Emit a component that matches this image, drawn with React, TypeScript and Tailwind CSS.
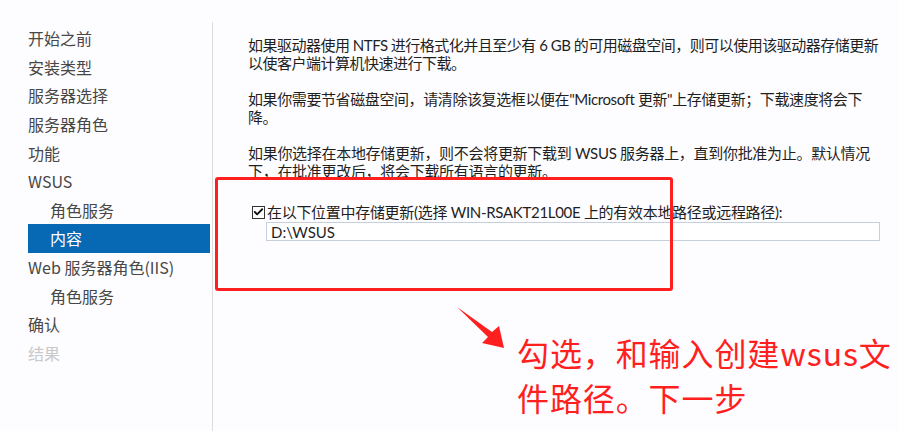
import { Check } from "lucide-react";

const navItems: { label: string; indent?: boolean; active?: boolean; disabled?: boolean }[] = [
  { label: "开始之前" },
  { label: "安装类型" },
  { label: "服务器选择" },
  { label: "服务器角色" },
  { label: "功能" },
  { label: "WSUS" },
  { label: "角色服务", indent: true },
  { label: "内容", indent: true, active: true },
  { label: "Web 服务器角色(IIS)" },
  { label: "角色服务", indent: true },
  { label: "确认" },
  { label: "结果", disabled: true },
];

const font = { fontFamily: '"Noto Sans CJK SC", "Noto Sans", sans-serif' };
const body = { fontFamily: 'Lato, "Noto Sans CJK SC", sans-serif' };

export default function App() {
  return (
    <div
      className="relative flex h-[431px] w-[899px] overflow-hidden bg-[#fdfcfe]"
      style={font}
    >
      {/* Sidebar */}
      <div className="w-[213px] shrink-0 pt-[22px]">
        <div className="h-full border-r border-[#dcdcdc] pl-[28px] pr-[2px] pt-[2px]">
          {navItems.map((item, i) => (
            <div
              key={i}
              className={`flex h-[28.6px] items-center whitespace-nowrap text-[16px] ${
                item.indent ? "pl-[22px]" : "pl-0"
              } ${
                item.active
                  ? "bg-[#0768b3] text-white"
                  : item.disabled
                    ? "text-[#c9c9c9]"
                    : "text-[#474747]"
              }`}
            >
              {item.label}
            </div>
          ))}
        </div>
      </div>

      {/* Content */}
      <div
        className="flex-1 pl-[35px] pr-[8px] pt-[36px] text-[15px] leading-[18px] text-[#1f1f1f]"
        style={body}
      >
        <p className="whitespace-nowrap tracking-[-0.5px]">
          如果驱动器使用 NTFS 进行格式化并且至少有 6 GB 的可用磁盘空间，则可以使用该驱动器存储更新
          <br />
          以使客户端计算机快速进行下载。
        </p>
        <p className="mt-[18px] whitespace-nowrap tracking-[-0.4px]">
          如果你需要节省磁盘空间，请清除该复选框以便在"Microsoft 更新"上存储更新；下载速度将会下
          <br />
          降。
        </p>
        <p className="mt-[18px] whitespace-nowrap tracking-[-0.3px]">
          如果你选择在本地存储更新，则不会将更新下载到 WSUS 服务器上，直到你批准为止。默认情况
          <br />
          下，在批准更改后，将会下载所有语言的更新。
        </p>

        <div className="mt-[23px] flex items-center pl-[4px]">
          <span className="flex h-[13px] w-[13px] items-center justify-center border border-[#333] bg-white">
            <Check className="h-[14px] w-[14px] text-[#111]" strokeWidth={4} />
          </span>
          <span className="ml-[2px] whitespace-nowrap text-[15px] tracking-[-0.3px]">
            在以下位置中存储更新(选择 WIN-RSAKT21L00E 上的有效本地路径或远程路径):
          </span>
        </div>
        <div className="ml-[18px] mt-[1px] flex h-[19px] w-[614px] items-center border border-[#c5d0dc] bg-white pl-[4px] text-[15px]">
          D:\WSUS
        </div>
      </div>

      {/* Annotation overlay */}
      <div className="absolute left-[215px] top-[177px] h-[114px] w-[458px] rounded-[3px] border-[3px] border-[#ff1f1f]" />
      <svg
        className="absolute left-0 top-0"
        width="899"
        height="431"
        viewBox="0 0 899 431"
      >
        <polygon
          points="457,307 492,332 499,326 504,348 482,343 488,337"
          fill="#ff1f1f"
        />
      </svg>
      <div className="absolute left-[517px] top-[330px] text-[32px] leading-[45px] tracking-[0.9px] text-[#ff1f1f]">
        <div className="whitespace-nowrap">勾选，和输入创建wsus文</div>
        <div className="whitespace-nowrap">件路径。下一步</div>
      </div>
    </div>
  );
}
